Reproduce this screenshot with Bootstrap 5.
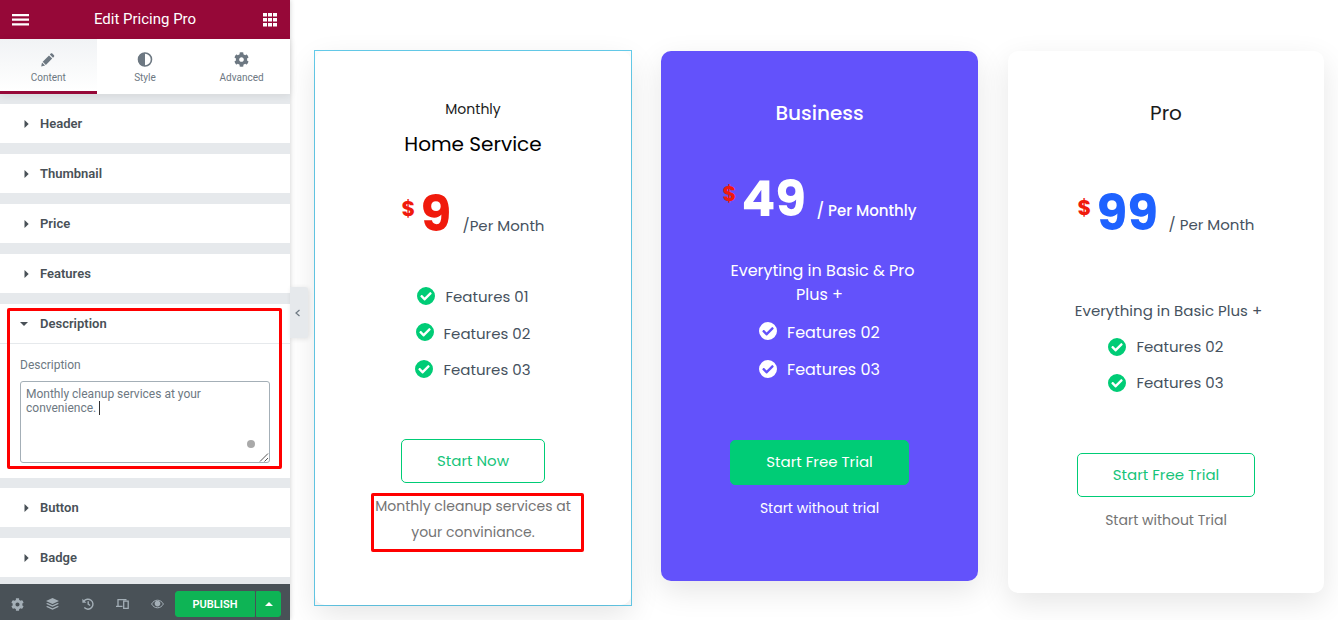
<!DOCTYPE html>
<html lang="en">

<head>
    <meta charset="UTF-8">
    <meta name="viewport" content="width=device-width, initial-scale=1.0">
    <title>Edit Pricing Pro</title>
    <!-- Bootstrap CSS -->
    <link href="https://cdn.jsdelivr.net/npm/bootstrap@5.3.0/dist/css/bootstrap.min.css" rel="stylesheet">
    <style>
        body {
            font-family: Roboto, "Liberation Sans", sans-serif;
            background-color: #fff;
            color: #495157;
            height: 620px;
        }

        svg {
            display: block;
            flex: none;
        }

        /* Editor panel */
        .panel {
            width: 290px;
            height: 620px;
            flex: none;
            background-color: #e6e9ec;
            box-shadow: 0 0 5px rgba(0, 0, 0, 0.2);
            z-index: 2;
        }

        .panel-header {
            height: 39px;
            background-color: #960838;
            padding: 0 13px 0 12px;
            font-size: 15px;
        }

        .panel-header span {
            margin-right: 2px;
        }

        .panel-tabs {
            height: 55px;
            margin-bottom: 10px;
            background-color: #fff;
            box-shadow: 0 2px 8px rgba(0, 0, 0, 0.08);
        }

        .panel-tab {
            padding-top: 13px;
            font-size: 10px;
            line-height: 12px;
            color: #6d7882;
            border-bottom: 3px solid transparent;
        }

        .panel-tab svg {
            margin-bottom: 4px;
        }

        .panel-tab.active {
            background-image: linear-gradient(#f1f3f5, #fff);
            border-color: #960838;
        }

        .section {
            background-color: #fff;
            margin-bottom: 11px;
        }

        .section-title {
            height: 39px;
            padding-left: 20px;
            font-size: 13px;
            font-weight: 600;
            line-height: 39px;
        }

        .section-title svg {
            width: 20px;
        }

        .section.open {
            margin-bottom: 10px;
            height: 174px;
        }

        .section.open .section-title {
            border-bottom: 1px solid #e6e9ec;
            height: 40px;
        }

        .control {
            padding: 13px 20px 0;
            font-size: 12px;
            color: #6d7882;
        }

        .control label {
            line-height: 16px;
            height: 24px;
        }

        .control textarea {
            height: 82px;
            padding: 5px;
            font-size: 12px;
            line-height: 14px;
            color: #6d7882;
            border: 1px solid #a4afb7;
            border-radius: 3px;
            resize: none;
        }

        .caret {
            left: 79px;
            top: 20px;
            width: 1px;
            height: 14px;
            background-color: #333;
        }

        .status-dot {
            left: 227px;
            top: 59px;
            width: 8px;
            height: 8px;
            background-color: #a9a9a9;
        }

        .resize-grip {
            right: 1px;
            bottom: 1px;
        }

        .panel-footer {
            height: 36px;
            margin-top: 7px;
            padding-right: 9px;
            background-color: #495157;
            color: #a4afb7;
        }

        .tool {
            width: 35px;
        }

        .publish {
            --bs-btn-bg: #0eb455;
            --bs-btn-border-color: #0eb455;
            --bs-btn-color: #fff;
            --bs-btn-padding-y: 0;
            --bs-btn-padding-x: 0;
            --bs-btn-font-size: 11px;
            --bs-btn-font-weight: 600;
            --bs-btn-border-radius: 3px;
            --bs-btn-line-height: 25px;
            height: 26px;
        }

        .publish-main {
            width: 80px;
        }

        .publish-more {
            width: 25px;
            margin-left: 1px !important;
        }

        .panel-toggle {
            left: 290px;
            top: 287px;
            width: 18px;
            height: 51px;
            background-color: #e6e9ec;
            border-radius: 0 3px 3px 0;
            box-shadow: 1px 1px 5px rgba(0, 0, 0, 0.1);
            z-index: 3;
        }

        /* Pricing tables */
        .preview {
            padding: 50px 0 0 24px;
            gap: 29px;
            font-family: Poppins, Inter, "Liberation Sans", sans-serif;
        }

        .plan {
            width: 317px;
            background-color: #fff;
            border-radius: 10px;
            box-shadow: 0 10px 30px rgba(0, 0, 0, 0.1);
            padding-top: 47px;
            margin-top: 1px;
            font-size: 15px;
            color: #46525e;
        }

        .selected {
            width: 318px;
            height: 556px;
            border: 1px solid #65cdec;
        }

        .selected .plan {
            width: 316px;
            height: 554px;
            padding-top: 48px;
            margin-top: 0;
        }

        .plan-business {
            height: 530px;
            background-color: #6352fb;
            color: #fff;
        }

        .plan-pro {
            width: 316px;
            height: 542px;
            margin-left: 1px;
        }

        .subtitle {
            font-size: 14px;
            line-height: 20px;
            margin-bottom: 10px;
            color: #1b1b1b;
        }

        .plan-name {
            font-size: 20px;
            line-height: 30px;
            font-weight: 400;
            margin: 0;
            color: #000;
        }

        .plan-business .plan-name {
            color: #fff;
            font-weight: 500;
        }

        .plan-pro .plan-name {
            color: #1b1b1b;
        }

        .price {
            height: 50px;
        }

        .selected .price {
            margin-top: 29px;
        }

        .plan-business .price {
            margin-top: 45px;
        }

        .plan-pro .price {
            margin-top: 59px;
        }

        .currency {
            width: 19px;
            font-size: 21px;
            font-weight: 700;
            line-height: 41px;
            color: #f01a0c;
        }

        .amount {
            font-size: 50px;
            font-weight: 700;
            line-height: 52px;
        }

        .selected .amount {
            width: 42px;
            color: #f01a0c;
        }

        .plan-business .amount {
            width: 75px;
        }

        .plan-pro .amount {
            width: 72px;
            color: #1e62ff;
        }

        .period {
            line-height: 25px;
        }

        .plan-business .period {
            font-weight: 500;
        }

        .intro {
            line-height: 24px;
        }

        .plan-business .intro {
            margin-top: 36px;
            margin-bottom: -1px;
            font-size: 16px;
        }

        .plan-business .intro span {
            padding-left: 6px;
        }

        .plan-pro .intro {
            margin-top: 61.5px;
            padding-left: 5px;
        }

        .features {
            margin: 41px 0 50.5px;
        }

        .features li {
            height: 36.5px;
            gap: 10px;
        }

        .features svg {
            color: #00cc76;
            margin-bottom: 3px;
        }

        .plan-business .features {
            margin-top: 8px;
            margin-bottom: 51px;
            font-size: 16px;
        }

        .plan-business .features li {
            height: 37.5px;
        }

        .plan-business .features svg {
            color: #fff;
        }

        .plan-pro .features {
            margin: 7px 0 51.5px;
        }

        .plan-pro .features li {
            height: 36px;
        }

        .plan-pro .features svg {
            margin-bottom: 2px;
        }

        .cta {
            --bs-btn-color: #16c47a;
            --bs-btn-border-color: #00cc76;
            --bs-btn-padding-y: 0;
            --bs-btn-padding-x: 0;
            --bs-btn-font-size: 15px;
            --bs-btn-border-radius: 5px;
            --bs-btn-line-height: 42px;
            width: 178px;
            height: 44px;
        }

        .selected .cta {
            width: 144px;
        }

        .plan-business .cta {
            --bs-btn-color: #fff;
            --bs-btn-bg: #00cc76;
            width: 179px;
            height: 45px;
        }

        .note {
            margin-top: 10px;
            font-size: 14px;
            line-height: 26px;
            color: #747474;
        }

        .plan-business .note {
            color: #fff;
        }

        /* Red highlight frames */
        .frame {
            border: 3px solid #f00;
            border-radius: 2px;
        }

        .frame-panel {
            left: 7px;
            top: 308px;
            width: 275px;
            height: 161px;
        }

        .frame-note {
            left: 56px;
            top: 0;
            width: 213px;
            height: 59px;
        }
    </style>
</head>

<body class="d-flex overflow-hidden position-relative">

    <!-- Shared icons -->
    <svg width="0" height="0" class="position-absolute">
        <symbol id="check" viewBox="0 0 18 18">
            <path fill="currentColor" fill-rule="evenodd"
                d="M9 0a9 9 0 1 1 0 18A9 9 0 0 1 9 0zM8 13.4l6.5-6.5a.6.6 0 0 0 0-.8l-.8-.8a.6.6 0 0 0-.8 0L7.6 10.600 5.100 8.100a.6.6 0 0 0-.8 0l-.8.8a.6.6 0 0 0 0 .8l3.700 3.700a.6.6 0 0 0 .8 0z" />
        </symbol>
        <symbol id="gear" viewBox="0 0 512 512">
            <path fill="currentColor"
                d="M487.400 315.700l-42.600-24.600c4.300-23.200 4.300-47 0-70.200l42.600-24.600c4.900-2.800 7.100-8.600 5.500-14-11.100-35.600-30-67.800-54.700-94.600-3.800-4.100-10-5.100-14.800-2.300L380.800 110c-17.900-15.400-38.500-27.300-60.800-35.100V25.800c0-5.600-3.900-10.500-9.400-11.700-36.700-8.200-74.300-7.800-109.200 0-5.500 1.200-9.400 6.100-9.400 11.700V75c-22.200 7.900-42.800 19.800-60.800 35.100L88.700 85.500c-4.900-2.800-11-1.900-14.800 2.300-24.700 26.700-43.600 58.900-54.700 94.600-1.700 5.400.6 11.200 5.500 14L67.300 221c-4.300 23.200-4.300 47 0 70.200l-42.600 24.600c-4.900 2.800-7.100 8.600-5.500 14 11.100 35.600 30 67.800 54.700 94.600 3.800 4.100 10 5.100 14.800 2.300l42.600-24.600c17.900 15.400 38.500 27.300 60.800 35.100v49.200c0 5.600 3.900 10.500 9.400 11.700 36.700 8.200 74.300 7.800 109.200 0 5.500-1.200 9.400-6.100 9.400-11.700v-49.200c22.200-7.900 42.800-19.800 60.800-35.100l42.600 24.600c4.900 2.800 11 1.900 14.800-2.300 24.700-26.700 43.600-58.900 54.700-94.600 1.500-5.500-.7-11.300-5.600-14.100zM256 336c-44.100 0-80-35.900-80-80s35.900-80 80-80 80 35.900 80 80-35.900 80-80 80z" />
        </symbol>
        <symbol id="arrow" viewBox="0 0 20 8">
            <path fill="currentColor" d="M4.500 0v8l4.200-4z" />
        </symbol>
    </svg>

    <!-- Editor panel -->
    <aside class="panel d-flex flex-column position-relative">
        <div class="panel-header d-flex align-items-center justify-content-between text-white">
            <svg width="17" height="13" viewBox="0 0 17 13" fill="#fff">
                <path d="M0 1h17v2.200H0zM0 5.600h17v2.200H0zM0 10.200h17v2.200H0z" />
            </svg>
            <span>Edit Pricing Pro</span>
            <svg width="14" height="14" viewBox="0 0 14 14" fill="#fff">
                <path d="M0 0h4v3.600H0zM5 0h4v3.600H5zM10 0h4v3.600h-4zM0 5h4v3.600H0zM5 5h4v3.600H5zM10 5h4v3.600h-4zM0 10h4v3.600H0zM5 10h4v3.600H5zM10 10h4v3.600h-4z" />
            </svg>
        </div>

        <div class="panel-tabs d-flex">
            <div class="panel-tab active col-4 d-flex flex-column align-items-center">
                <svg width="16" height="16" viewBox="0 0 16 16" fill="currentColor">
                    <path d="M1.200 14.400l.8-3.900 3.100 3.100zM2.700 9.700l6.300-6.300 3.200 3.200-6.300 6.300zM9.800 2.600l1-1c.4-.4 1.100-.4 1.500 0l1.700 1.700c.4.400.4 1.100 0 1.500l-1 1z" />
                </svg>
                Content
            </div>
            <div class="panel-tab col-4 d-flex flex-column align-items-center">
                <svg width="16" height="16" viewBox="0 0 16 16">
                    <circle cx="8" cy="7.500" r="6.500" fill="none" stroke="currentColor" stroke-width="1.600" />
                    <path fill="currentColor" d="M8 .7a6.800 6.800 0 0 0 0 13.600z" />
                </svg>
                Style
            </div>
            <div class="panel-tab col-4 d-flex flex-column align-items-center">
                <svg width="15" height="16" viewBox="0 0 15 16"><use href="#gear" y="-.5" width="15" height="16" /></svg>
                Advanced
            </div>
        </div>

        <div class="section">
            <div class="section-title d-flex align-items-center"><svg height="8"><use href="#arrow" /></svg>Header</div>
        </div>
        <div class="section">
            <div class="section-title d-flex align-items-center"><svg height="8"><use href="#arrow" /></svg>Thumbnail</div>
        </div>
        <div class="section">
            <div class="section-title d-flex align-items-center"><svg height="8"><use href="#arrow" /></svg>Price</div>
        </div>
        <div class="section">
            <div class="section-title d-flex align-items-center"><svg height="8"><use href="#arrow" /></svg>Features</div>
        </div>
        <div class="section open">
            <div class="section-title d-flex align-items-center">
                <svg height="8" viewBox="0 0 20 8"><path fill="currentColor" d="M0 2h8L4 6z" /></svg>Description
            </div>
            <div class="control">
                <label class="d-block" for="description">Description</label>
                <div class="position-relative">
                    <textarea class="form-control" id="description" spellcheck="false">Monthly cleanup services at your convenience.</textarea>
                    <span class="caret position-absolute"></span>
                    <span class="status-dot rounded-circle position-absolute"></span>
                    <svg class="resize-grip position-absolute" width="10" height="10" viewBox="0 0 10 10">
                        <path d="M1 9.500l8-8M5.500 9.500l3.500-3.500" stroke="#555" stroke-width="1" />
                    </svg>
                </div>
            </div>
        </div>
        <div class="section">
            <div class="section-title d-flex align-items-center"><svg height="8"><use href="#arrow" /></svg>Button</div>
        </div>
        <div class="section mb-0">
            <div class="section-title d-flex align-items-center"><svg height="8"><use href="#arrow" /></svg>Badge</div>
        </div>

        <div class="panel-footer d-flex align-items-center">
            <div class="tool d-flex justify-content-center pt-1"><svg width="13" height="13"><use href="#gear" /></svg></div>
            <div class="tool d-flex justify-content-center pt-1">
                <svg width="13" height="12" viewBox="0 0 13 12" fill="currentColor">
                    <path d="M6.500 0L13 3 6.500 6 0 3zM1.600 4.900L6.500 7.200l4.900-2.300L13 5.700 6.500 8.700 0 5.700zM1.600 7.900l4.900 2.300 4.900-2.300 1.600.8-6.500 3-6.500-3z" />
                </svg>
            </div>
            <div class="tool d-flex justify-content-center pt-1">
                <svg width="12" height="12" viewBox="0 0 12 12" fill="none" stroke="currentColor" stroke-width="1.400">
                    <path d="M1.800 3.400A5 5 0 1 1 2.300 9.600M6.200 3.200v3l2 1.300" />
                    <path d="M.4.800v4h4z" fill="currentColor" stroke="none" />
                </svg>
            </div>
            <div class="tool d-flex justify-content-center pt-1">
                <svg width="13" height="12" viewBox="0 0 13 12" fill="none" stroke="currentColor" stroke-width="1.300">
                    <path d="M2 8V1.700h8.500M0 8.300h6.500M7.700 3.200h4.500v7.200H7.700z" />
                </svg>
            </div>
            <div class="tool d-flex justify-content-center pt-1">
                <svg width="13" height="10" viewBox="0 0 13 10">
                    <path d="M.6 5C2 2.600 4 1.200 6.500 1.200S11 2.600 12.400 5C11 7.400 9 8.800 6.500 8.800S2 7.400.6 5z" fill="none" stroke="currentColor" />
                    <circle cx="6.500" cy="4.600" r="2.800" fill="currentColor" />
                </svg>
            </div>
            <div class="btn-group mt-1">
                <button type="button" class="btn publish publish-main">PUBLISH</button>
                <button type="button" class="btn publish publish-more d-flex align-items-center justify-content-center">
                    <svg width="8" height="4" viewBox="0 0 8 4" fill="#fff"><path d="M0 4h8L4 0z" /></svg>
                </button>
            </div>
        </div>
    </aside>

    <div class="panel-toggle position-absolute d-flex align-items-center">
        <svg width="14" height="8" viewBox="0 0 14 8"><path d="M9.500 1L6 4l3.500 3" fill="none" stroke="#6d7882" stroke-width="1.200" /></svg>
    </div>

    <!-- Pricing tables -->
    <main class="preview d-flex align-items-start">
        <div class="selected">
            <div class="plan text-center d-flex flex-column align-items-center">
                <div class="subtitle">Monthly</div>
                <h2 class="plan-name">Home Service</h2>
                <div class="price d-flex text-start">
                    <span class="currency">$</span>
                    <span class="amount">9</span>
                    <span class="period align-self-end">/Per Month</span>
                </div>
                <ul class="features list-unstyled">
                    <li class="d-flex align-items-center justify-content-center"><svg width="18" height="18"><use href="#check" /></svg>Features 01</li>
                    <li class="d-flex align-items-center justify-content-center"><svg width="18" height="18"><use href="#check" /></svg>Features 02</li>
                    <li class="d-flex align-items-center justify-content-center"><svg width="18" height="18"><use href="#check" /></svg>Features 03</li>
                </ul>
                <a class="btn cta">Start Now</a>
                <div class="note w-100 position-relative">
                    Monthly cleanup services at<br>your conviniance.
                    <div class="frame frame-note position-absolute"></div>
                </div>
            </div>
        </div>

        <div class="plan plan-business text-center d-flex flex-column align-items-center">
            <h2 class="plan-name">Business</h2>
            <div class="price d-flex text-start">
                <span class="currency">$</span>
                <span class="amount">49</span>
                <span class="period align-self-end">/ Per Monthly</span>
            </div>
            <div class="intro"><span>Everyting in Basic &amp; Pro</span><br>Plus +</div>
            <ul class="features list-unstyled">
                <li class="d-flex align-items-center"><svg width="18" height="18"><use href="#check" /></svg>Features 02</li>
                <li class="d-flex align-items-center"><svg width="18" height="18"><use href="#check" /></svg>Features 03</li>
            </ul>
            <a class="btn cta">Start Free Trial</a>
            <div class="note">Start without trial</div>
        </div>

        <div class="plan plan-pro text-center d-flex flex-column align-items-center">
            <h2 class="plan-name">Pro</h2>
            <div class="price d-flex text-start">
                <span class="currency">$</span>
                <span class="amount">99</span>
                <span class="period align-self-end">/ Per Month</span>
            </div>
            <div class="intro">Everything in Basic Plus +</div>
            <ul class="features list-unstyled">
                <li class="d-flex align-items-center"><svg width="18" height="18"><use href="#check" /></svg>Features 02</li>
                <li class="d-flex align-items-center"><svg width="18" height="18"><use href="#check" /></svg>Features 03</li>
            </ul>
            <a class="btn cta">Start Free Trial</a>
            <div class="note">Start without Trial</div>
        </div>
    </main>

    <div class="frame frame-panel position-absolute z-3"></div>

    <!-- Bootstrap Bundle with Popper -->
    <script src="https://cdn.jsdelivr.net/npm/bootstrap@5.3.0/dist/js/bootstrap.bundle.min.js"></script>
</body>

</html>
